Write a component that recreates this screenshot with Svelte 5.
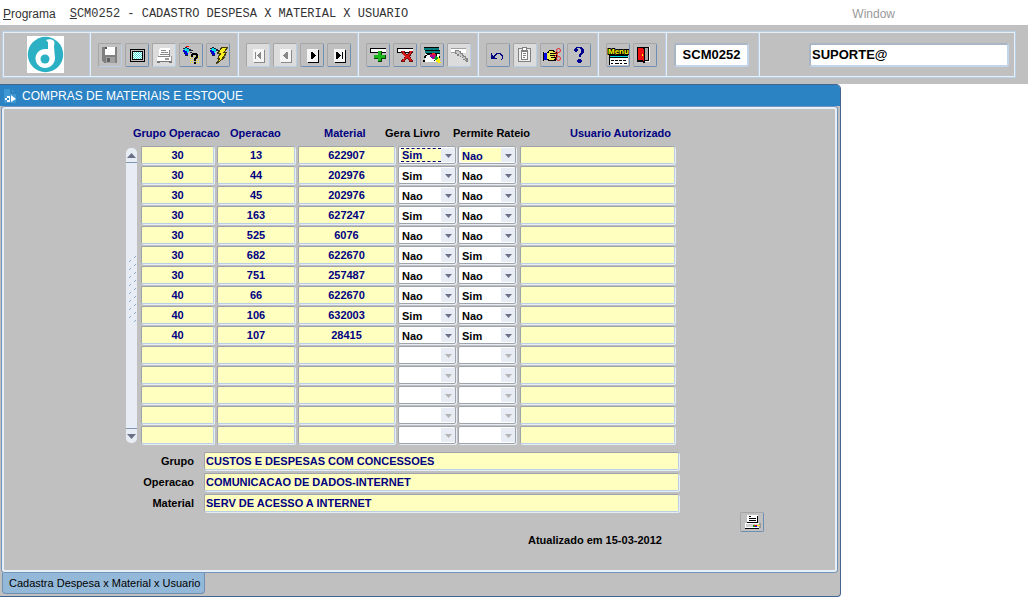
<script lang="ts">
	type Answer = 'Sim' | 'Nao' | '';

	interface Row {
		grupo: string;
		operacao: string;
		material: string;
		livro: Answer;
		rateio: Answer;
		usuario: string;
	}

	const row = (grupo = '', operacao = '', material = '', livro: Answer = '', rateio: Answer = ''): Row => ({
		grupo,
		operacao,
		material,
		livro,
		rateio,
		usuario: ''
	});

	const VISIBLE_ROWS = 15;
	const records = [
		row('30', '13', '622907', 'Sim', 'Nao'),
		row('30', '44', '202976', 'Sim', 'Nao'),
		row('30', '45', '202976', 'Nao', 'Nao'),
		row('30', '163', '627247', 'Sim', 'Nao'),
		row('30', '525', '6076', 'Nao', 'Nao'),
		row('30', '682', '622670', 'Nao', 'Sim'),
		row('30', '751', '257487', 'Nao', 'Nao'),
		row('40', '66', '622670', 'Nao', 'Sim'),
		row('40', '106', '632003', 'Sim', 'Nao'),
		row('40', '107', '28415', 'Nao', 'Sim')
	];

	let rows = $state<Row[]>([
		...records,
		...Array.from({ length: VISIBLE_ROWS - records.length }, () => row())
	]);
	let current = $state(0);

	let details = $state([
		{ id: 'grupo', label: 'Grupo', value: 'CUSTOS E DESPESAS COM CONCESSOES' },
		{ id: 'operacao', label: 'Operacao', value: 'COMUNICACAO DE DADOS-INTERNET' },
		{ id: 'material', label: 'Material', value: 'SERV DE ACESSO A INTERNET' }
	]);

	const groups = [
		[
			{ icon: 'save', label: 'Salvar', off: true },
			{ icon: 'screen', label: 'Tela' },
			{ icon: 'print', label: 'Imprimir', off: true, pale: true },
			{ icon: 'query', label: 'Entrar consulta' },
			{ icon: 'execute', label: 'Executar consulta' }
		],
		[
			{ icon: 'first', label: 'Primeiro', off: true, pale: true },
			{ icon: 'prev', label: 'Anterior', off: true, pale: true },
			{ icon: 'next', label: 'Proximo' },
			{ icon: 'last', label: 'Ultimo' }
		],
		[
			{ icon: 'add', label: 'Inserir' },
			{ icon: 'remove', label: 'Remover' },
			{ icon: 'clear', label: 'Limpar' },
			{ icon: 'edit', label: 'Editar', off: true, pale: true }
		],
		[
			{ icon: 'undo', label: 'Desfazer' },
			{ icon: 'paste', label: 'Colar', off: true, pale: true },
			{ icon: 'hand', label: 'Lista de valores' },
			{ icon: 'help', label: 'Ajuda' }
		],
		[
			{ icon: 'menu', label: 'Menu' },
			{ icon: 'exit', label: 'Sair' }
		]
	];

	// scrollbar grip: two staggered columns of ticks
	const grip = Array.from({ length: 17 }, (_, i) => ({ x: i % 2 ? 2 : 7, y: 1 + i * 4 }));
</script>

{#snippet glyph(name: string)}
	<svg
		class="glyph"
		viewBox={name === 'printer' ? '0 0 22 18' : '0 0 22 22'}
		shape-rendering="crispEdges"
		aria-hidden="true"
	>
		{#if name === 'save'}
			<path d="M3 3h15v16H5l-2-2z" fill="#808080" />
			<path d="M6 3h10v8H6z" fill="#fff" />
			<path d="M6 3h2v2H6z" fill="#555" />
			<path d="M7 13h9v6H7z" fill="#a0a0a0" />
			<path d="M8 14h3v4H8z" fill="#606060" />
		{:else if name === 'screen'}
			<rect x="4" y="5" width="15" height="13" fill="#000" />
			<rect x="5" y="6" width="13" height="11" fill="#c0c0c0" />
			<rect x="6" y="7" width="11" height="9" fill="#000" />
			<rect x="7" y="8" width="9" height="7" fill="#50e0e0" />
			<path d="M7 8.500h9M7 10.500h9M7 12.500h9M7 14.500h9" stroke="#fff" stroke-dasharray="1 1" />
			<path d="M8 9.500h8M8 11.500h8M8 13.500h8" stroke="#fff" stroke-dasharray="1 1" />
		{:else if name === 'print'}
			<path d="M7 4h9l1 1v7H6V6z" fill="#fff" />
			<path d="M8 6.500h5M8 8.500h7M7 10.500h9M16.500 6v6H5" fill="none" stroke="#888" />
			<path d="M4 13h14v4H4z" fill="#fff" />
			<path d="M18 12h1v5h-1zM12 14h4v2h-4z" fill="#999" />
			<path d="M4 17.500h15" stroke="#777" />
			<path d="M4 18h3v1H4zM16 18h3v1h-3z" fill="#777" />
		{:else if name === 'printer'}
			<path d="M6 2h11v7H6z" fill="#fff" />
			<path d="M8 3.500h2M8 5.500h7M8 7.500h7M16.500 3v6.500H6" fill="none" stroke="#000" />
			<path d="M4 10h16v5H4z" fill="#fff" />
			<path d="M5 11h13v3H5z" fill="#d0d0d0" />
			<path d="M18 10h2v5h-2z" fill="#999" />
			<path d="M4 15h14v1H4z" fill="#000" />
			<path d="M12 12h2v2h-2z" fill="#00a000" />
			<path d="M13 12h3v1h-3z" fill="#e00000" />
			<path d="M14 13h2v1h-2z" fill="#0000e0" />
			<path d="M16 12h3v1h-3z" fill="#f0f000" />
		{:else if name === 'query' || name === 'execute'}
			<path d="M4 4h3v1h2v1h2v1H9v1H8v3H5V9H4z" fill="#00d8e8" />
			<path d="M3 6h2v1h2v2h1v2H5V9H4z" fill="#0000d0" />
			<path d="M3 4h2v1H3zM5 3h2v1H5zM7 4h2v1H7zM9 5h2v2H9zM11 6h2v1h-2zM10 8h2v1h-2zM4 9h1v1H4zM5 11h3v1H5z" fill="#202038" />
			{#if name === 'query'}
				<path d="M6 2h3v1H6z" fill="#f00" />
				<path
					d="M10 12.500h10M10 14.500h10M10 16.500h10M10 18.500h10"
					stroke="#f0e820"
					stroke-width="1"
					stroke-dasharray="1 1"
				/>
				<path d="M11 10h1V9h5v1h1v4h-1v1h-1v2h-2v-3h1v-1h1v-2h-3v2h-2zM14 18h2v2h-2z" fill="#000" />
			{:else}
				<path d="M14 5h2l-5 7h3l-5 8h2l8-9h-3l5-7z" fill="#707070" />
				<path d="M15 3h6l-4 5h3l-4 5h2L9 20l4-6h-2l3-5h-3z" fill="#f8f020" stroke="#443c00" stroke-width="1" />
			{/if}
		{:else if name === 'first' || name === 'prev' || name === 'next' || name === 'last'}
			{@const ink = name === 'first' || name === 'prev' ? '#888' : '#000'}
			<path d="M7 6h11v13H7z" fill={ink} />
			<path d="M6 5h11v13H6z" fill="#f5f5f5" />
			{#if name === 'first'}
				<path d="M8 8h1v7H8zM14 8v7h-1l-3-3v-1l3-3z" fill={ink} />
			{:else if name === 'prev'}
				<path d="M14 8v7h-1l-4-3v-1l4-3z" fill={ink} />
			{:else if name === 'next'}
				<path d="M10 8v7h1l4-3v-1l-4-3z" fill={ink} />
			{:else}
				<path d="M8 8v7h1l4-3v-1L9 8zM14 8h1v7h-1z" fill={ink} />
			{/if}
		{:else if name === 'add' || name === 'remove'}
			<path d="M3 4h16v5H3z" fill="#000" />
			<path d="M4 5h15v3H4z" fill="#fff" />
			{#if name === 'add'}
				<path d="M11 7h4v4h4v4h-4v3h-4v-3H7v-4h4z" fill="#064006" />
				<path d="M11 7h3v4h4v3h-4v3h-3v-3H7v-3h4z" fill="#18b818" />
			{:else}
				<path d="M7 7h4v2h1v1h2V9h1V7h4v2h-1v1h-1v2h-1v1h1v2h1v1h1v2h-4v-2h-1v-1h-2v1h-1v2H7v-2h1v-1h2v-2h1v-1h-1v-1H9v-1H8V9H7z" fill="#701010" />
				<path d="M8 7h2v2h1v1h1v1h2v-1h1V9h1V7h2v1h-1v2h-1v1h-1v2h1v1h1v2h1v1h-2v-1h-1v-1h-1v-1h-2v1h-1v1h-1v1H8v-1h1v-1h1v-1h1v-2h-1v-1H9V8H8z" fill="#d81818" />
			{/if}
		{:else if name === 'clear'}
			<path d="M3 4h15v2H3zM4 7h15v2H4z" fill="#007c7c" />
			<path d="M3 3.500h15M4 6.500h15M5 9.500h14" stroke="#000" />
			<path d="M4 10h14v8H4z" fill="#fff" />
			<path d="M2 16h2v2H2zM3 12h2v2H3zM4 11h2v1H4zM6 10h3v1H6z" fill="#000" />
			<path d="M9 10h2V9h3v1h1v4h-1v1h-3v-1h-1v-1H9z" fill="#c00080" />
			<path d="M11 9h3v2h-3z" fill="#f02020" />
			<path d="M10 13h2v1h-2z" fill="#0040f0" />
			<path d="M14 12h2v1h1v2h-1v1h-2v-1h-1v-1h1z" fill="#00a030" />
			<path d="M17 13h1v2h1v3h1v1h-3v-1h-2v-2h1v-1h1z" fill="#f8f000" />
			<path d="M15 10h1v2h-1zM13 16h1v1h-1zM18 12h1v2h-1z" fill="#000" />
		{:else if name === 'edit'}
			<path d="M3 4h15v5H3z" fill="#fff" />
			<path d="M3 4.500h15M3 8.500h6" stroke="#a0a0a0" />
			<path d="M7 6h4v1h2v2h2v2h1v1h2v2h2v4h-2v-1h-1v-1h-2v-2h-1v-1h-2v-1H9v-2H7z" fill="#858585" />
			<path d="M8 7h3v1h1v2h2v2h1v1h2v2h1v1h-1v-1h-2v-2h-2v-1h-2v-2H9V9H8z" fill="#c8c8c8" />
		{:else if name === 'undo'}
			<path
				d="M4 9h1v2h1v1h1v-1h1v-1h1V9h5v1h1v1h1v4h-1v1h-1v-1h1v-3h-1v-1h-1v-1h-3v1H9v1H8v2h2v1H4z"
				fill="#000080"
			/>
		{:else if name === 'paste'}
			<path d="M4 4h13v14H4z" fill="#808080" />
			<path d="M5 5h11v12H5z" fill="#f0f0f0" />
			<path d="M7 6h7v10H7z" fill="#808080" />
			<path d="M8 8h5v7H8z" fill="#fff" />
			<path d="M8 3h5v4H8z" fill="#808080" />
			<path d="M9 4h3v2H9z" fill="#fff" />
			<path d="M9 9.500h3M9 11.500h3M9 13.500h2" stroke="#808080" />
		{:else if name === 'hand'}
			<path d="M3 9h3v7H3z" fill="#0000e8" />
			<path d="M2 8h1v9H2zM6 8h1V7h1V6h5v1h1v1h2v1h1v1h-1v6h-1v1H7v-1H6z" fill="#000" />
			<path d="M6 9h2V7h4v1h3v1h-3v1h3v1h-2v1h2v1h-2v1h1v1h-1v1H8v-1H6z" fill="#f0e850" />
			<path d="M9 9h3v1H9zM9 11h4v1H9zM10 13h3v1h-3z" fill="#000" />
			<g fill="none" stroke="#e82020" shape-rendering="auto">
				<circle cx="17.500" cy="6.500" r="2" />
				<circle cx="17.500" cy="14.500" r="2" />
				<path d="M13 13l4-4M14 8l3 4" />
			</g>
		{:else if name === 'help'}
			<path
				d="M6 5h1V4h1V3h6v1h1v1h1v4h-1v1h-1v1h-1v2h-2v-3h1V9h1V5h-1V4h-3v1h1v2H9v1H7V7H6zM10 15h3v1h1v2h-1v1h-3v-1H9v-2h1z"
				fill="#000090"
			/>
		{:else if name === 'menu'}
			<text x="1" y="10" class="menu-word">Menu</text>
			<path d="M2 11h19v10H2z" fill="#000" />
			<path d="M3 14h18v7H3z" fill="#fff" />
			<path d="M3 12.500h18" stroke="#00e0e8" />
			<path d="M4 16.500h16" stroke="#000" stroke-dasharray="3 1" />
			<path d="M4 19.500h16" stroke="#000" stroke-dasharray="2 2 4 1" />
		{:else if name === 'exit'}
			<path d="M6 3h10v15H6z" fill="#f4f4f4" />
			<path d="M3 3h12v14h-4v2H9v-1H3z" fill="#000" />
			<path d="M11 4h3v12h-3z" fill="#a8a8a8" />
			<path d="M4 4h5v1h1v12H9v-1H4z" fill="#f01010" />
			<path d="M8 10h1v2H8z" fill="#ff0" />
		{/if}
	</svg>
{/snippet}

{#snippet answer(i: number, key: 'livro' | 'rateio', title: string)}
	<span class="combo" class:current={i === current} class:blank={!rows[i][key]}>
		<select
			class:focused={i === current && key === 'livro'}
			aria-label="{title} {i + 1}"
			bind:value={rows[i][key]}
			onfocus={() => (current = i)}
		>
			<option value=""></option>
			<option>Sim</option>
			<option>Nao</option>
		</select>
		<svg class="drop" viewBox="0 0 14 14" aria-hidden="true"><path d="M4 6h7L7.500 10z" /></svg>
	</span>
{/snippet}

<nav class="menubar">
	<a href="#programa"><u>P</u>rograma</a>
	<a class="mono" href="#scm0252"><u>S</u>CM0252 - CADASTRO DESPESA X MATERIAL X USUARIO</a>
	<span class="window-menu">Window</span>
</nav>

<header class="toolbar">
	<div class="frame">
		<div class="group brand">
			<svg viewBox="0 0 37 37" role="img" aria-label="Logo">
				<rect width="37" height="37" fill="#fff" />
				<circle cx="18.500" cy="18.500" r="17.700" fill="#2cb0c4" />
				<path
					d="M19 4c3-1 6-1 8 1 1 2 0 4 0 6l1 11c0 6-5 10-10 10S8.500 28 8.500 22.500 13 13 18 13h3V7c0-1-1-2-2-3z"
					fill="#fff"
				/>
				<circle cx="18" cy="23" r="4.500" fill="#2cb0c4" />
			</svg>
		</div>
		{#each groups as group, g (g)}
			<div class="group" class:short={group.length === 2} class:wide={group.length === 5}>
				{#each group as b (b.icon)}
					<button class="tool" class:off={b.off} class:pale={b.pale} aria-label={b.label}>
						{@render glyph(b.icon)}
					</button>
				{/each}
			</div>
		{/each}
		<div class="group code">
			<input class="head-field" aria-label="Programa" value="SCM0252" />
		</div>
		<div class="group user">
			<input class="head-field" aria-label="Usuario" value="SUPORTE@" />
		</div>
	</div>
</header>

<main class="window">
	<h1 class="title">
		<svg viewBox="0 0 14 16" aria-hidden="true">
			<path d="M1 1h7l5 4v10H1z" fill="#3f97d4" />
			<path d="M8 1v4h5" fill="none" stroke="#1f6da8" />
			<path d="M2 10h2V8h3v6H4v-2H2zM8 7l5 4-5 3z" fill="#fff" />
			<path d="M4 10h2v2H4z" fill="#2b83c4" />
		</svg>
		COMPRAS DE MATERIAIS E ESTOQUE
	</h1>

	<section class="panel">
		<div class="records">
			<table>
				<thead>
					<tr>
						<th>Grupo Operacao</th>
						<th>Operacao</th>
						<th>Material</th>
						<th class="dark">Gera Livro</th>
						<th class="dark">Permite Rateio</th>
						<th>Usuario Autorizado</th>
					</tr>
				</thead>
				<tbody>
					{#each rows as r, i (i)}
						<tr>
							<td><input class="field" aria-label="Grupo Operacao {i + 1}" bind:value={r.grupo} /></td>
							<td><input class="field" aria-label="Operacao {i + 1}" bind:value={r.operacao} /></td>
							<td><input class="field" aria-label="Material {i + 1}" bind:value={r.material} /></td>
							<td class="livro">{@render answer(i, 'livro', 'Gera Livro')}</td>
							<td class="rateio">{@render answer(i, 'rateio', 'Permite Rateio')}</td>
							<td><input class="field" aria-label="Usuario Autorizado {i + 1}" bind:value={r.usuario} /></td>
						</tr>
					{/each}
				</tbody>
			</table>
			<div class="scroll">
				<button aria-label="Subir"><svg viewBox="0 0 9 5"><path d="M0 5h9L4.500 0z" /></svg></button>
				<svg class="grip" viewBox="0 0 10 68" aria-hidden="true">
					{#each grip as t (t.y)}
						<path d="M{t.x} {t.y + 1}l2-2" />
					{/each}
				</svg>
				<button class="down" aria-label="Descer"><svg viewBox="0 0 9 5"><path d="M0 0h9L4.500 5z" /></svg></button>
			</div>
		</div>

		<div class="details">
			{#each details as d (d.id)}
				<label for={d.id}>{d.label}</label>
				<input class="field" id={d.id} bind:value={d.value} />
			{/each}
		</div>

		<div class="foot">
			<p>Atualizado em 15-03-2012</p>
			<button class="tool print" aria-label="Imprimir relatorio">{@render glyph('printer')}</button>
		</div>
	</section>

	<div class="tabs">
		<button class="tab">Cadastra Despesa x Material x Usuario</button>
	</div>
</main>

<style>
	:global(body) {
		background: #fff;
		font-family: 'Liberation Sans', Arial, sans-serif;
		font-size: 11px;
		color: #000;
	}
	input,
	select,
	button {
		box-sizing: border-box;
		min-width: 0;
		margin: 0;
		padding: 0;
		font: inherit;
		color: inherit;
		outline: none;
	}

	.menubar {
		display: flex;
		align-items: center;
		height: 25px;
		padding: 0 4px 0 3px;
		font-size: 12px;
	}
	.menubar a {
		padding-top: 2px;
		color: #333;
		text-decoration: none;
	}
	.menubar .mono {
		flex: 1;
		padding-left: 14px;
		font-family: 'Liberation Mono', monospace;
	}
	.window-menu {
		padding: 2px 133px 0 0;
		color: #999;
	}

	.toolbar {
		margin-right: 4px;
		padding: 6px 12px 6px 2px;
		background: #c0c0c0;
	}
	/* two-tone hairlines: blue outside, near white inside */
	.frame {
		display: flex;
		height: 43px;
		margin: 1px;
		border: 1px solid #e6eef8;
		outline: 1px solid #b8cfe5;
	}
	.group {
		box-sizing: border-box;
		display: flex;
		flex: none;
		align-items: center;
		gap: 3px;
		width: 120px;
		padding-left: 7px;
		border-right: 1px solid #e6eef8;
		box-shadow: inset -1px 0 0 #b8cfe5;
	}
	.brand {
		width: 87px;
		padding-left: 23px;
	}
	.brand svg {
		width: 37px;
		height: 37px;
	}
	.wide {
		width: 148px;
	}
	.short {
		width: 68px;
	}
	.code {
		width: 93px;
	}
	.user {
		flex: 1;
		justify-content: flex-end;
		padding-right: 5px;
		border-right: 0;
		box-shadow: none;
	}
	.tool {
		flex: none;
		width: 24px;
		height: 24px;
		background: #c0c0c0;
		border: 1px solid #a4a6aa;
		border-right-color: #6f90b4;
		border-bottom-color: #6f90b4;
		border-radius: 2px;
	}
	.tool.off {
		border-right-color: #b8cfe5;
		border-bottom-color: #b8cfe5;
	}
	.tool.pale {
		background: #dcdcdc;
	}
	.glyph {
		display: block;
		width: 22px;
		height: 22px;
	}
	.menu-word {
		font: bold 8px 'Liberation Sans', Arial, sans-serif;
		fill: #ff0;
		stroke: #000;
		stroke-width: 2px;
		paint-order: stroke;
	}
	.head-field {
		width: 75px;
		height: 24px;
		background: #fff;
		border: 2px solid #c3d5e8;
		border-top-color: #a9b6c6;
		border-left-color: #a9b6c6;
		border-radius: 3px;
		font-size: 13px;
		font-weight: bold;
		text-align: center;
	}
	.user .head-field {
		width: 200px;
		padding-left: 1px;
		text-align: left;
	}

	.window {
		margin-right: 191px;
		padding: 0 3px 2px 2px;
		background: #c0c0c0;
		border: 1px solid #43648f;
		border-left-width: 0;
		border-radius: 0 5px 4px 0;
	}
	.title {
		display: flex;
		align-items: center;
		gap: 5px;
		height: 21px;
		margin: 0 -3px 1px -2px;
		padding-left: 3px;
		background: #2b83c4;
		border-top-right-radius: 4px;
		font-size: 12px;
		font-weight: normal;
		color: #fff;
	}
	.title svg {
		width: 14px;
		height: 16px;
	}
	.panel {
		padding: 17px 157px 24px 122px;
		border: 2px solid #e9eff6;
		border-radius: 3px;
		box-shadow: 0 0 0 1px #7394ba;
	}

	.records {
		display: grid;
		grid-template-columns: 15px 1fr;
	}
	table {
		display: block;
		grid-area: 1 / 1 / 2 / 3;
		font-weight: bold;
		color: #000080;
	}
	thead,
	tbody {
		display: block;
	}
	tr {
		display: grid;
		grid-template-columns: 76px 81px 100px 60px 62px 1fr;
		height: 20px;
	}
	thead tr {
		grid-template-columns: 97px 94px 61px 68px 117px 1fr;
		padding-left: 7px;
	}
	tbody {
		padding-left: 15px;
	}
	th {
		padding: 1px 0 0;
		text-align: left;
		white-space: nowrap;
	}
	.dark {
		color: #000;
	}
	td {
		padding: 0 3px 0 0;
	}
	.livro {
		padding-right: 2px;
	}
	.rateio {
		padding-right: 4px;
	}
	.field {
		display: block;
		width: 100%;
		height: 18px;
		background: #ffffc0;
		border: 1px solid #9fa3aa;
		border-right-color: #b8cfe5;
		border-bottom-color: #b8cfe5;
		border-radius: 2px;
		box-shadow: 1px 1px 0 #e6edf6;
		font-weight: bold;
		text-align: center;
		color: #000080;
	}
	.combo {
		box-sizing: border-box;
		display: flex;
		height: 18px;
		padding: 1px 0 1px 2px;
		background: #fff;
		border: 1px solid #9fa3aa;
		border-radius: 2px;
		box-shadow: 1px 1px 0 #e6edf6;
	}
	.combo select {
		flex: 1;
		padding: 2px 0 0 1px;
		appearance: none;
		background: #fff;
		border: 0;
		border-radius: 0;
		color: #000;
	}
	.combo.current select {
		background: #ffffc0;
		color: #000080;
	}
	.combo .focused {
		padding: 0 0 0 1px;
		border: 1px dashed #000080;
		border-width: 1px 0;
	}
	.drop {
		width: 14px;
		height: 14px;
		background: #e8edf5;
		fill: #6b7088;
	}
	.blank .drop {
		fill: #b4b4b4;
	}

	.scroll {
		grid-area: 1 / 1;
		align-self: end;
		display: flex;
		flex-direction: column;
		align-items: center;
		justify-content: space-between;
		width: 11px;
		height: 295px;
		margin-bottom: 3px;
		background: #e8edf5;
		border-radius: 5px;
	}
	.scroll button {
		width: 11px;
		height: 15px;
		background: none;
		border: 0;
		border-bottom: 1px solid #8296b0;
	}
	.scroll .down {
		border-top: 1px solid #8296b0;
		border-bottom: 0;
	}
	.scroll button svg {
		display: block;
		width: 9px;
		height: 5px;
		margin: 0 auto;
		fill: #6b7088;
	}
	.grip {
		width: 10px;
		height: 68px;
		margin-bottom: 12px;
		fill: none;
		stroke: #8fa9c8;
	}

	.details {
		display: grid;
		grid-template-columns: 68px 1fr;
		gap: 3px 10px;
		align-items: center;
		margin: 6px -1px 0 0;
		font-weight: bold;
	}
	.details label {
		text-align: right;
	}
	.details .field {
		padding-left: 1px;
		text-align: left;
	}

	.foot {
		display: flex;
		align-items: flex-end;
		justify-content: space-between;
		height: 34px;
		margin: 0 -86px 0 402px;
	}
	.foot p {
		margin: 0;
		font-weight: bold;
	}
	.print {
		align-self: flex-start;
		height: 20px;
	}
	.print .glyph {
		height: 18px;
	}

	.tabs {
		display: flex;
		height: 21px;
		margin-top: 1px;
	}
	.tab {
		padding: 0 4px 0 6px;
		background: #94b8d8;
		border: 1px solid #6f90b4;
		border-top: 0;
		border-radius: 0 0 4px 4px;
	}
</style>
